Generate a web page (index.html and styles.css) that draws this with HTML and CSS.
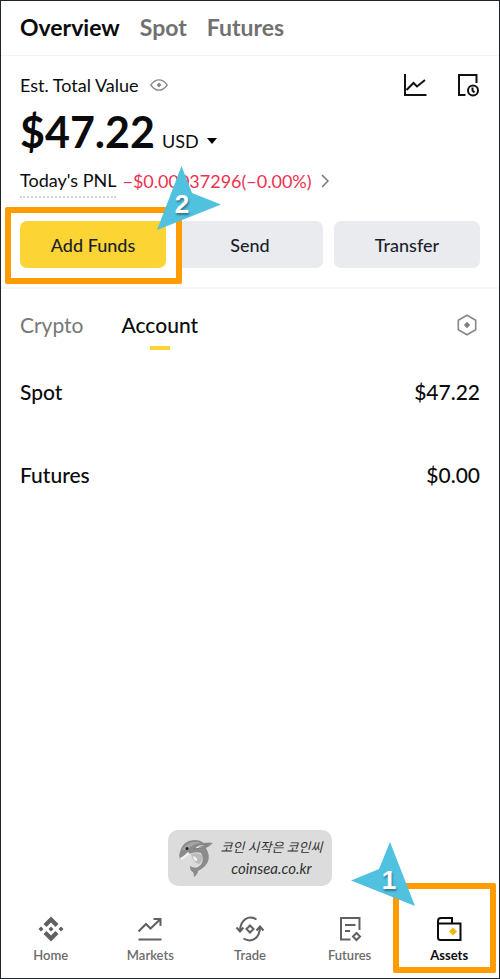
FILE: index.html
```html
<!DOCTYPE html>
<html lang="en">
<head>
<meta charset="utf-8">
<meta name="viewport" content="width=device-width, initial-scale=1">
<title>Assets overview</title>
<link rel="stylesheet" href="styles.css">
</head>
<body>
<header class="top-tabs">
  <a class="active" href="#overview">Overview</a>
  <a href="#spot">Spot</a>
  <a href="#futures">Futures</a>
</header>
<main>
  <section class="summary">
    <div class="value-head">
      <span>Est. Total Value</span>
      <button class="icon-button eye" aria-label="Hide value">
        <svg width="18" height="12" viewBox="0 0 18 12" fill="none" stroke="#8a8a8a" stroke-width="1.3"><path d="M.8 6Q4.500.8 9 .8T17.200 6Q13.500 11.200 9 11.200T.8 6Z"/><path d="M9 3.600 11.400 6 9 8.400 6.600 6Z" fill="#858585" stroke="none"/></svg>
      </button>
      <div class="tools">
        <button class="icon-button" aria-label="Analysis">
          <svg width="24" height="24" viewBox="0 0 24 24" fill="none" stroke="#111" stroke-width="2"><path d="M2 1V22H23.500M3.500 17 10.500 10 14 13.500 22 7"/></svg>
        </button>
        <button class="icon-button" aria-label="History">
          <svg width="24" height="24" viewBox="0 0 24 24" fill="none" stroke="#111" stroke-width="2"><path d="M9.500 22H3V2H20.500V10"/><circle cx="17" cy="17.500" r="5"/><path d="M16.500 14.500V17.500L18.500 19.500"/></svg>
        </button>
      </div>
    </div>
    <div class="total">
      <strong>$47.22</strong>
      <button class="currency">USD <svg width="10" height="6" viewBox="0 0 10 6"><path d="M0 0H10L5 6Z"/></svg></button>
    </div>
    <div class="pnl">
      <span class="pnl-label">Today's PNL</span>
      <span class="pnl-value">−$0.00037296(−0.00%)</span>
      <svg width="8" height="14" viewBox="0 0 8 14" fill="none" stroke="#777" stroke-width="1.500"><path d="M1 1 7 7 1 13"/></svg>
    </div>
    <div class="actions">
      <div class="action marked">
        <button class="primary">Add Funds</button>
        <div class="highlight highlight-funds"></div>
        <div class="callout callout-funds">
          <svg width="64" height="65" viewBox="0 0 64 65"><path d="M24.500 0 35 27 64 38.500 0 64Z" fill="#50c1df"/></svg>
          <span>2</span>
        </div>
      </div>
      <div class="action"><button>Send</button></div>
      <div class="action"><button>Transfer</button></div>
    </div>
  </section>
  <section class="accounts">
    <div class="account-tabs">
      <a href="#crypto">Crypto</a>
      <a class="active" href="#account">Account</a>
      <button class="icon-button settings" aria-label="Settings">
        <svg width="20" height="22" viewBox="0 0 20 22" fill="none" stroke="#888" stroke-width="1.600"><path d="M10 1.200 18.700 6.200V15.800L10 20.800 1.300 15.800V6.200Z"/><path d="M10 7.800 13.200 11 10 14.200 6.800 11Z" fill="#808080" stroke="none"/></svg>
      </button>
    </div>
    <dl class="balances">
      <div><dt>Spot</dt><dd>$47.22</dd></div>
      <div><dt>Futures</dt><dd>$0.00</dd></div>
    </dl>
  </section>
</main>
<aside class="watermark">
  <svg width="36" height="40" viewBox="0 0 36 40">
    <path d="M2 14C4 6 9 2 17 2C21 2 23 3 26 5Q31 4 35 5Q32 8 28 10C34 20 30 28 20 33Q20 36 16 39Q16 36 15 34Q12 33 12 28Q17 31 20 29C25 26 26 21 23 15Q14 12 3 21Q0 20 2 14Z" fill="#8b8b8b"/>
    <path d="M4 12C8 5 16 2 23 5Q14 6 9 12Z" fill="#a4a4a4"/>
    <path d="M2 20Q6 18 10 14L12 16Q8 19 4 22Z" fill="#f1f1f1"/>
    <path d="M13 16Q21 14 24 18Q25 23 21 26Q15 25 13 16Z" fill="#bcbcbc"/>
    <path d="M15 18Q20 19 19 23Q15 23 15 18Z" fill="#f1f1f1"/>
    <path d="M16 11Q20 5 29 7Q24 11 16 11Z" fill="#e9e9e9" stroke="#777" stroke-width="1"/>
    <path d="M20 10Q23 7 28 7Q25 10 20 10Z" fill="#909090"/>
    <circle cx="9" cy="10.500" r="1.500" fill="#222"/>
  </svg>
  <p><span class="slogan" lang="ko">코인 시작은 코인씨</span><span>coinsea.co.kr</span></p>
</aside>
<nav class="bottom-nav">
  <a href="#home">
    <svg width="26" height="26" viewBox="0 0 26 26" fill="#5f6062"><path d="M13 .5 20.500 8 17.500 11 13 6.500 8.500 11 5.500 8ZM13 25.500 20.500 18 17.500 15 13 19.500 8.500 15 5.500 18ZM3 10.500 5.500 13 3 15.500.5 13ZM13 10.500 15.500 13 13 15.500 10.500 13ZM23 10.500 25.500 13 23 15.500 20.500 13Z"/></svg>
    <span>Home</span>
  </a>
  <a href="#markets">
    <svg width="26" height="26" viewBox="0 0 26 26" fill="none" stroke="#5f6062" stroke-width="2"><path d="M1.500 15.500 9 8 13.500 12.500 23 3.500M16.500 3H23.500V10M1.500 23.500H24.500"/></svg>
    <span>Markets</span>
  </a>
  <a href="#trade">
    <svg width="30" height="26" viewBox="0 0 30 26" fill="none" stroke="#5f6062" stroke-width="2"><path d="M21.500 3.500C14-1 5 3 5 15.500M1.500 11.500 5 15.500 8.500 11.500M8.500 22.500C16 27 25 23 25 10.500M21.500 14.500 25 10.500 28.500 14.500M15 9.500 18.500 13 15 16.500 11.500 13Z"/></svg>
    <span>Trade</span>
  </a>
  <a href="#futures">
    <svg width="26" height="26" viewBox="0 0 26 26" fill="none" stroke="#5f6062" stroke-width="2"><path d="M13.500 23.500H4V2H22.500V14M8 9H18.500M8 15H13M19.500 17 23 20.500 19.500 24 16 20.500Z"/></svg>
    <span>Futures</span>
  </a>
  <a class="active" href="#assets">
    <svg width="26" height="26" viewBox="0 0 26 26" fill="none" stroke="#0b0b0d" stroke-width="2"><path d="M2 5Q2 2 5 2H16V7.500H24.500V24H4.500Q2 24 2 21.500ZM2 7.500H16"/><path d="M17 11.500 21 15.500 17 19.500 13 15.500Z" fill="#efb90b" stroke="none"/></svg>
    <span>Assets</span>
    <div class="highlight highlight-assets"></div>
    <div class="callout callout-assets">
      <svg width="64" height="65" viewBox="0 0 64 65"><path d="M39 0 64 64 0 38.500 28 27Z" fill="#50c1df"/></svg>
      <span>1</span>
    </div>
  </a>
</nav>
</body>
</html>
```
FILE: styles.css
```css
* { box-sizing: border-box; }
body {
  margin: 0;
  min-height: 100vh;
  display: flex;
  flex-direction: column;
  border: 1px solid #1d2331;
  background: #fff;
  color: #0b0b0d;
  font-family: Lato, "Noto Sans CJK KR", sans-serif;
}
a { color: inherit; text-decoration: none; }
button { border: 0; padding: 0; font: inherit; color: inherit; background: none; cursor: pointer; }
svg { display: block; flex: none; }
main { flex: 1; }

.top-tabs {
  display: flex;
  align-items: center;
  gap: 20px;
  height: 55px;
  padding: 0 19px 3px;
  border-bottom: 1px solid #f3f3f4;
  font-size: 23px;
  font-weight: 700;
  color: #717171;
}
.top-tabs .active { color: #0b0b0d; }

.summary { padding: 16px 19px 19px; border-bottom: 2px solid #f7f7f8; }
.value-head { display: flex; align-items: center; height: 26px; font-size: 18px; }
.eye { margin-left: 11px; }
.tools { display: flex; gap: 29px; margin-left: auto; }
.total { display: flex; align-items: baseline; gap: 7px; margin-top: 8px; line-height: 52px; }
.total strong { font-size: 43px; }
.currency { display: flex; align-items: center; gap: 8px; font-size: 18px; line-height: 24px; }
.pnl { display: flex; align-items: center; gap: 6px; margin-top: 6px; height: 34px; font-size: 18px; }
.pnl-label { line-height: 32px; border-bottom: 2px dotted #d4d4d4; }
.pnl-value { color: #ed3250; }
.pnl svg { margin-left: 3px; }
.actions { display: grid; grid-template-columns: repeat(3, 1fr); gap: 11px; margin-top: 23px; }
.action { position: relative; }
.action button {
  width: 100%;
  height: 47px;
  border-radius: 7px;
  background: #eaebef;
  color: #1c1f2b;
  font-size: 18px;
  font-weight: 500;
}
.action .primary { background: #fcd535; }
.marked { z-index: 1; }

.highlight { position: absolute; border: 6px solid #ff9c00; border-radius: 2px; }
.highlight-funds { inset: -14px -16px -16px -15px; }
.highlight-assets { inset: -17px 3px 5px -6px; }
.callout { position: absolute; z-index: 1; }
.callout span {
  position: absolute;
  inset: 24px 0 auto;
  text-align: center;
  color: #fff;
  font: 700 26px/28px "Liberation Sans", sans-serif;
  text-shadow: 1px 2px 2px #39758a;
}
.callout-funds { right: -55px; top: -55px; }
.callout-funds span { right: 14px; }
.callout-assets { left: -48px; top: -58px; }
.callout-assets span { left: 11px; }

.accounts { padding: 22px 19px 0; }
.account-tabs { display: flex; align-items: flex-start; gap: 38px; font-size: 21px; line-height: 28px; color: #777; }
.account-tabs .active { color: #0b0b0d; font-weight: 500; }
.account-tabs .active::after { content: ""; display: block; width: 20px; height: 4px; margin: 7px auto 0; background: #fcd535; }
.settings { margin: 3px 3px 0 auto; }
.balances { margin: 28px 0 0; font-size: 21px; line-height: 28px; font-weight: 500; }
.balances div { display: flex; justify-content: space-between; margin-bottom: 55px; }
.balances dd { margin: 0; }

.watermark {
  display: flex;
  align-items: center;
  align-self: center;
  gap: 7px;
  height: 56px;
  padding: 0 10px;
  margin-bottom: 14px;
  border-radius: 10px;
  background: #dcdcdc;
  color: #303030;
  font-size: 15px;
  line-height: 21px;
  font-style: italic;
}
.watermark p { margin: 0; text-align: center; }
.watermark p span { display: block; }
.watermark .slogan { font-size: 13px; }

.bottom-nav { display: grid; grid-template-columns: repeat(5, 1fr); height: 78px; }
.bottom-nav a {
  position: relative;
  display: flex;
  flex-direction: column;
  align-items: center;
  gap: 5px;
  padding-top: 16px;
  color: #6b6b6b;
  font-size: 13px;
  line-height: 16px;
  font-weight: 600;
}
.bottom-nav .active { color: #0b0b0d; font-weight: 700; }
```
